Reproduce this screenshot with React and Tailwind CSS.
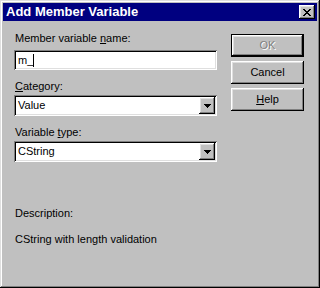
export default function App() {
  const raised = 'shadow-[inset_-1px_-1px_#000,inset_1px_1px_#fff,inset_-2px_-2px_#808080,inset_2px_2px_#dfdfdf]'
  const sunken = 'shadow-[inset_1px_1px_#808080,inset_-1px_-1px_#fff,inset_2px_2px_#000,inset_-2px_-2px_#dfdfdf]'

  return (
    <div className="w-[320px] h-[288px] bg-[#c0c0c0] p-[3px] shadow-[inset_-1px_-1px_#000,inset_1px_1px_#dfdfdf,inset_-2px_-2px_#808080,inset_2px_2px_#fff] font-['Liberation_Sans',Arial,sans-serif] text-[11px] leading-[13px] text-black">
      <div className="h-[18px] bg-[#000080] flex items-center justify-between pl-[3px] pr-[2px]">
        <span className="text-white font-bold text-[13px] leading-[14px]">Add Member Variable</span>
        <button className={`w-[16px] h-[14px] bg-[#c0c0c0] ${raised} flex items-center justify-center`}>
          <svg width="8" height="7" viewBox="0 0 8 7">
            <path d="M0 0h2v1H0zM6 0h2v1H6zM1 1h2v1H1zM5 1h2v1H5zM2 2h4v1H2zM3 3h2v1H3zM2 4h4v1H2zM1 5h2v1H1zM5 5h2v1H5zM0 6h2v1H0zM6 6h2v1H6z" fill="#000" />
          </svg>
        </button>
      </div>

      <div className="flex pl-[11px] pr-[13px]">
        <div className="w-[203px] flex flex-col">
          <div className="mt-[11px] pl-[1px]">Member variable <u>n</u>ame:</div>
          <div className={`mt-[5px] h-[20px] bg-white ${sunken} flex items-center pl-[4px]`}>
            <span>m_</span>
            <span className="w-[1px] h-[13px] bg-black" />
          </div>

          <div className="mt-[10px] pl-[1px]"><u>C</u>ategory:</div>
          <Combo value="Value" sunken={sunken} raised={raised} />

          <div className="mt-[10px] pl-[1px]">Variable <u>t</u>ype:</div>
          <Combo value="CString" sunken={sunken} raised={raised} />

          <div className="mt-[45px] pl-[1px]">Description:</div>
          <div className="mt-[13px] pl-[1px]">CString with length validation</div>
        </div>

        <div className="ml-auto w-[73px] flex flex-col mt-[13px] gap-[4px]">
          <div className="h-[23px] bg-black p-[1px]">
            <div className={`h-full bg-[#c0c0c0] ${raised} flex items-center justify-center`}>
              <span className="text-[#808080] [text-shadow:1px_1px_0_#fff]">OK</span>
            </div>
          </div>
          <button className={`h-[23px] bg-[#c0c0c0] ${raised} flex items-center justify-center`}>Cancel</button>
          <button className={`h-[23px] bg-[#c0c0c0] ${raised} flex items-center justify-center`}><u>H</u>elp</button>
        </div>
      </div>
    </div>
  )
}

function Combo({ value, sunken, raised }) {
  return (
    <div className={`mt-[2px] h-[21px] bg-white ${sunken} flex items-center p-[2px]`}>
      <span className="flex-1 pl-[2px]">{value}</span>
      <div className={`w-[16px] h-[17px] bg-[#c0c0c0] ${raised} flex items-center justify-center`}>
        <svg width="7" height="4" viewBox="0 0 7 4">
          <path d="M0 0h7v1H0zM1 1h5v1H1zM2 2h3v1H2zM3 3h1v1H3z" fill="#000" />
        </svg>
      </div>
    </div>
  )
}
